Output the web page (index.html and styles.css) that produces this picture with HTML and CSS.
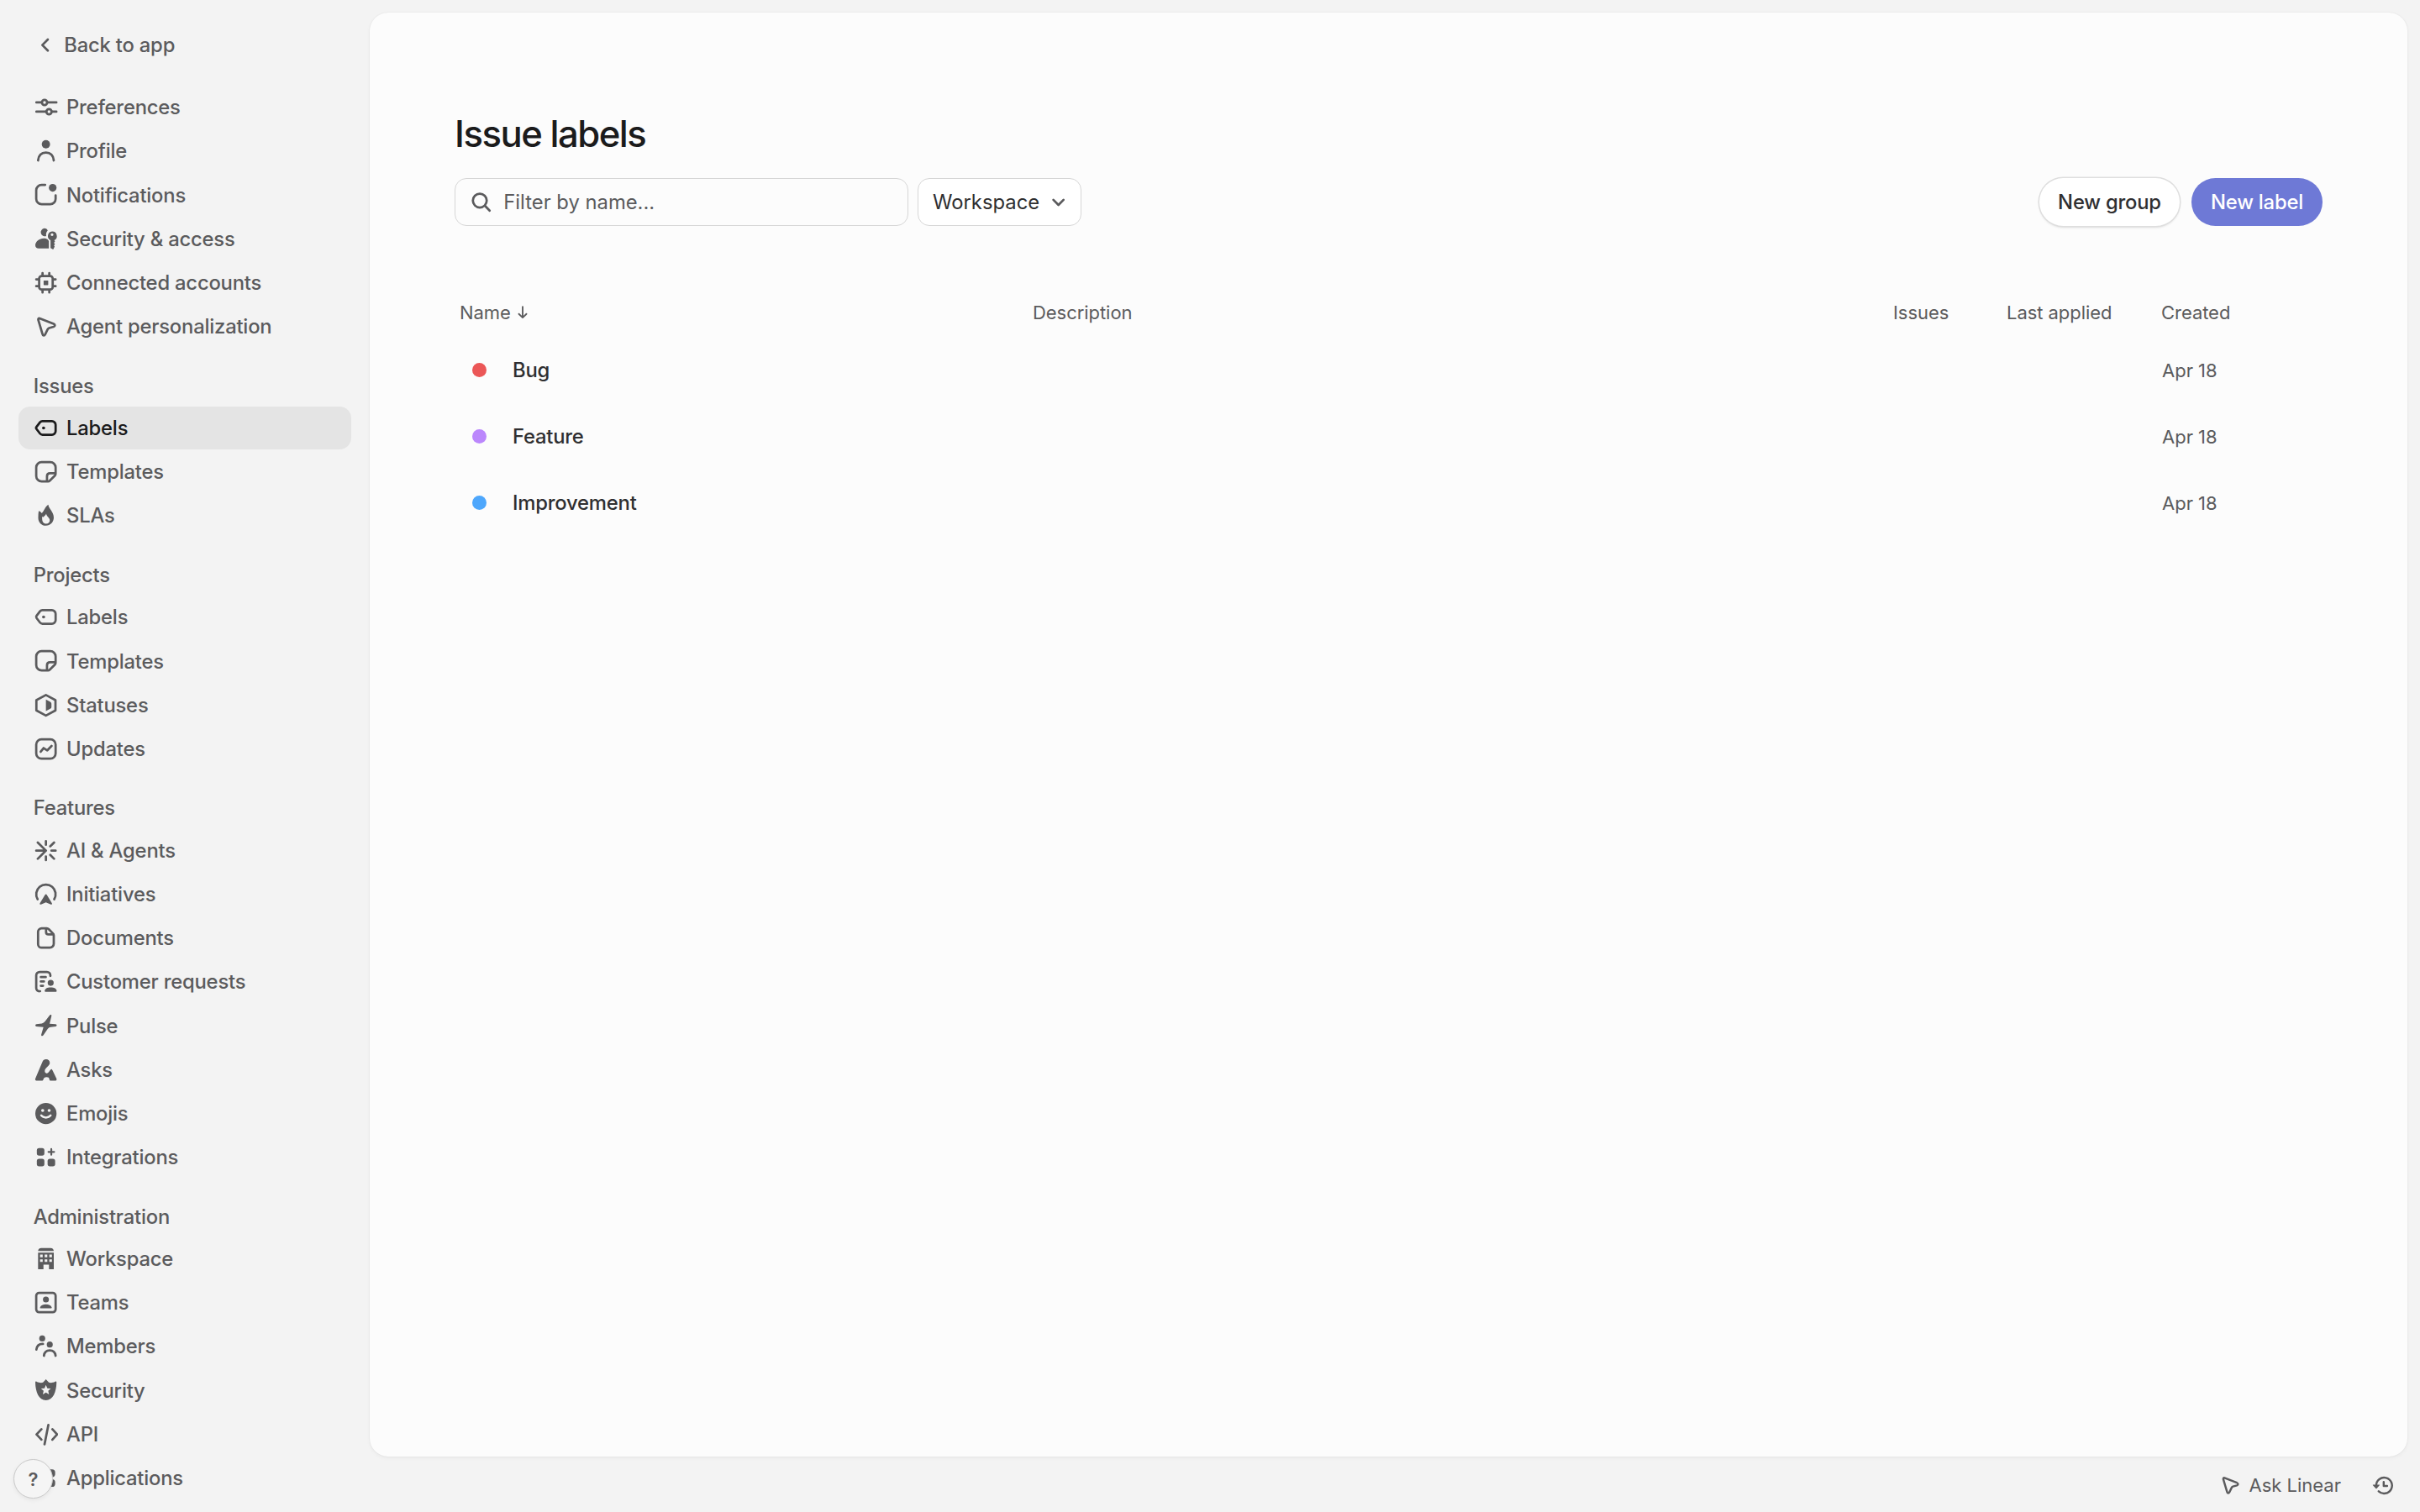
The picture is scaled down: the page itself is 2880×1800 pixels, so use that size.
FILE: index.html
```html
<!DOCTYPE html>
<html lang="en">
<head>
    <meta charset="UTF-8">
    <meta name="viewport" content="width=device-width, initial-scale=1.0">
    <title>Issue labels</title>
    <link rel="stylesheet" href="styles.css">
</head>
<body>
    <!-- shared icons, all on a 16x16 grid -->
    <svg class="sprite">
        <symbol id="i-preferences" viewBox="0 0 16 16">
            <path class="line" d="M1.8 4.9h3.6M8.8 4.9h6M1.8 10.9h6.4M11.6 10.9h3.2"/>
            <circle class="line" cx="7.1" cy="4.9" r="1.7"/>
            <circle class="line" cx="10" cy="10.9" r="1.7"/>
        </symbol>
        <symbol id="i-profile" viewBox="0 0 16 16">
            <circle cx="8" cy="3.7" r="2.7"/>
            <path class="line" d="M2.9 14.2C3.3 10.5 5 9.1 8 9.1s4.7 1.4 5.1 5.1"/>
        </symbol>
        <symbol id="i-notifications" viewBox="0 0 16 16">
            <path class="line" d="M7.5 1.7H5.2A3.5 3.5 0 0 0 1.7 5.2v5.6a3.5 3.5 0 0 0 3.5 3.5h5.6a3.5 3.5 0 0 0 3.5-3.5V8.5"/>
            <circle cx="12.4" cy="3.6" r="2.5"/>
        </symbol>
        <symbol id="i-access" viewBox="0 0 16 16">
            <path d="M6.9 1a2.6 2.6 0 0 1 2.3 1.3C8.3 3.2 7.9 4.7 8.2 6a2.6 2.6 0 1 1-1.3-5Z"/>
            <path d="M6.6 7.5c1 0 1.8.2 2.5.7.2.4.5.7.8.9V14H3.3C1.9 14 1.1 13.2 1.1 12c0-2.2 2.6-4.5 5.5-4.5Z"/>
            <path fill-rule="evenodd" d="M12 3a3 3 0 0 1 1.4 5.7l.5.8-.7.9.7.9-.7.9.5.7-1 1.8-1.7-.9V8.7A3 3 0 0 1 12 3Zm0 1.2a.9.9 0 1 0 0 1.8.9.9 0 0 0 0-1.8Z"/>
        </symbol>
        <symbol id="i-connected" viewBox="0 0 16 16">
            <rect class="line" x="3.6" y="3.6" width="8.8" height="8.8" rx="1.6"/>
            <path class="line" d="M5.8 1.7v1.6M10.2 1.7v1.6M5.8 12.7v1.6M10.2 12.7v1.6M1.7 5.8h1.6M1.7 10.2h1.6M12.7 5.8h1.6M12.7 10.2h1.6"/>
            <rect x="6.5" y="6.5" width="3" height="3" rx=".3"/>
        </symbol>
        <symbol id="i-cursor" viewBox="0 0 16 16">
            <path class="line" d="M3.9 2.7 13 6.3c1.1.5 1.1 1.5 0 1.9L10.1 9c-.5.2-.8.5-1 .9l-1.6 3.3c-.5 1-1.5.9-1.7-.2L3 3.6c-.1-.7.3-1.1.9-.9Z"/>
        </symbol>
        <symbol id="i-label" viewBox="0 0 16 16">
            <path class="line" d="M5.7 3.5h6.2a2.4 2.4 0 0 1 2.4 2.4v4a2.4 2.4 0 0 1-2.4 2.4H5.7c-.6 0-1.1-.2-1.5-.7L1.9 8.6c-.4-.5-.4-.9 0-1.4l2.3-3c.4-.5.9-.7 1.5-.7Z"/>
            <circle cx="6.5" cy="7.9" r="1"/>
        </symbol>
        <symbol id="i-template" viewBox="0 0 16 16">
            <path class="line" d="M9.4 14.3H5.2a3.5 3.5 0 0 1-3.5-3.5V5.2a3.5 3.5 0 0 1 3.5-3.5h5.6a3.5 3.5 0 0 1 3.5 3.5v4.1c0 .5-.2.9-.5 1.2l-3.3 3.3c-.3.3-.7.5-1.1.5Z"/>
            <path class="line" d="M8.7 14v-3.1c0-1.2.8-2 2-2H14"/>
        </symbol>
        <symbol id="i-flame" viewBox="0 0 16 16">
            <path fill-rule="evenodd" d="M9.6.9c-.2 2.2 3.5 4.5 3.5 8.4 0 3-2.2 5.3-5.1 5.3S3 12.5 3 9.5c0-1.7.1-3.2.3-4.5.9.3 1.5.8 2 1.5C7 4.9 7.3 2.2 9.6.9ZM8.2 6.8c-.2 1-1.7 1.7-1.7 2.3-.3-.2-.6-.3-.9-.3-.3 2.5.4 4.6 2.4 4.6 1.7 0 2.5-1.1 2.5-2.4 0-1.4-2.1-2.4-2.3-4.2Z"/>
        </symbol>
        <symbol id="i-status" viewBox="0 0 16 16">
            <path class="line" d="M8 1.3 14.2 4.6v6.7L8 14.7 1.8 11.3V4.6Z"/>
            <path d="M8 4.3 10.8 5.7q.8.4.8 1.2v2.2q0 .8-.8 1.2L8 11.7Z"/>
        </symbol>
        <symbol id="i-update" viewBox="0 0 16 16">
            <rect class="line" x="1.7" y="1.7" width="12.6" height="12.6" rx="3.4"/>
            <path class="line" d="M4.6 9.8 6.5 7.4 8.9 8.9 11.7 6"/>
        </symbol>
        <symbol id="i-ai" viewBox="0 0 16 16">
            <path class="line" d="M8 1.8v2.4M8 11.8v2.4M11.6 8h2.7M13.3 2.7l-2.5 2.5M13.3 13.3l-2.5-2.5M2.7 2.7 8 8l-5.3 5.3M1.7 8H8"/>
        </symbol>
        <symbol id="i-initiative" viewBox="0 0 16 16">
            <path class="line" d="M2.6 11.2a6.3 6.3 0 1 1 10.8 0"/>
            <path d="M7.5 8.2c.2-.4.8-.4 1 0l3.4 5.6c.3.6-.1 1-.7.8L8 13.2l-3.2 1.4c-.6.2-1-.2-.7-.8Z"/>
        </symbol>
        <symbol id="i-document" viewBox="0 0 16 16">
            <path class="line" d="M5.2 1.7h3.3c.6 0 1 .2 1.4.6l2.6 2.7c.4.4.6.9.6 1.4v5.4a2.5 2.5 0 0 1-2.5 2.5H5.2a2.3 2.3 0 0 1-2.3-2.3V4a2.3 2.3 0 0 1 2.3-2.3Z"/>
            <path class="line" d="M8.1 1.9v2.3c0 .9.6 1.5 1.5 1.5h3.1"/>
        </symbol>
        <symbol id="i-request" viewBox="0 0 16 16">
            <path class="line" d="M4.2 14.2h-.4a2 2 0 0 1-2.1-2.1V3.9a2.2 2.2 0 0 1 2.2-2.2h4.8a2.2 2.2 0 0 1 2.2 2.2v.4M4.7 5h3.2M4.7 7.9h2M4.7 10.7h1.4"/>
            <circle cx="11.1" cy="8.8" r="1.95"/>
            <path d="M7.2 14.1c0-1.5 1.7-2.3 3.9-2.3s3.9.8 3.9 2.3c0 .3-.2.5-.5.5H7.7c-.3 0-.5-.2-.5-.5Z"/>
        </symbol>
        <symbol id="i-pulse" viewBox="0 0 16 16">
            <path d="M10.3 1.6c.6-.8 1.6-.6 1.3.5L10.4 7l3.9.2c1 .1 1 1.3 0 1.5l-3.2.4c-1 .2-1.5.5-2 1.3l-2.7 4c-.7.9-1.7.5-1.4-.5L6.4 9.100l-4.600-.3c-.9-.1-.9-1.300 0-1.500l3.500-.5c.9-.2 1.500-.6 2.100-1.300Z"/>
        </symbol>
        <symbol id="i-asks" viewBox="0 0 16 16">
            <path d="M8.100 1.100c1.900 0 2.900 1.700 2.200 3.300-.5 1.200-2.100 1.900-2.800 3.300-.5 1-.2 2.200.8 2.500 1.600.4 2-2.400 3.500-2.700.4.500.8 1.300 1.100 2l1.900 4c.4.900 0 1.500-.9 1.500h-2.600c-.7 0-1-.3-1.100-1-.1-.9-.6-1.300-1.800-1.300s-1.800.5-2 1.300c-.2.700-.5 1-1.200 1H2.100c-1 0-1.300-.6-.9-1.500l4.500-10.700c.4-1.100 1.300-1.700 2.400-1.700Z"/>
        </symbol>
        <symbol id="i-emoji" viewBox="0 0 16 16">
            <circle cx="8" cy="8" r="6.9"/>
            <circle class="hole" cx="5.9" cy="6" r="1"/>
            <circle class="hole" cx="10.1" cy="6" r="1"/>
            <path class="hole-line" d="M4.9 9.2c1.5 1.9 4.7 1.9 6.2 0"/>
        </symbol>
        <symbol id="i-integration" viewBox="0 0 16 16">
            <rect x="2.1" y="2.1" width="4.9" height="4.9" rx="1.5"/>
            <rect x="2.1" y="9" width="4.9" height="4.9" rx="1.5"/>
            <rect x="9.1" y="9" width="4.9" height="4.9" rx="1.5"/>
            <path class="line thin" d="M11.5 2.700v3.700M9.650 4.550h3.700"/>
        </symbol>
        <symbol id="i-workspace" viewBox="0 0 16 16">
            <path d="M5 .9h6c1.300 0 2.100.8 2.100 2H2.900c0-1.200.8-2 2.100-2Z"/>
            <path fill-rule="evenodd" d="M2.900 4h10.200v10.700H10v-2.900H6.400v2.900H2.900ZM4.200 5.200v1.700h1.700V5.200Zm3 0v1.700h1.700V5.200Zm3 0v1.700h1.700V5.200Zm-6 3.100V10h1.700V8.300Zm3 0V10h1.700V8.300Zm3 0V10h1.700V8.300Z"/>
        </symbol>
        <symbol id="i-team" viewBox="0 0 16 16">
            <rect class="line" x="1.7" y="1.7" width="12.6" height="12.6" rx="1.9"/>
            <circle cx="8" cy="6" r="1.95"/>
            <path d="M4.200 11.200c.4-1.300 1.900-2 3.800-2s3.400.7 3.800 2c.1.300-.1.500-.4.500H4.600c-.3 0-.5-.2-.4-.5Z"/>
        </symbol>
        <symbol id="i-members" viewBox="0 0 16 16">
            <circle cx="5.6" cy="2.95" r="1.95"/>
            <circle cx="10.5" cy="6.9" r="1.95"/>
            <path class="line" d="M1.800 10.200c.3-2.600 1.800-3.800 4.300-3.700M6.700 14.200c.3-2.500 1.400-3.500 3.800-3.500s3.500 1 3.800 3.500"/>
        </symbol>
        <symbol id="i-security" viewBox="0 0 16 16">
            <path fill-rule="evenodd" d="M8 1.100 9.900 3.200c1.200.4 2.600.2 4.200-.6.500-.2.800 0 .8.600C14.800 9.400 12.600 14.800 8 14.800S1.200 9.400 1.100 3.200c0-.6.300-.8.800-.6 1.600.8 3 1 4.200.6Zm0 3.700-.9 2.100-2.300.2 1.700 1.500-.5 2.300L8 9.700l2 1.200-.5-2.300 1.700-1.500-2.300-.2Z"/>
        </symbol>
        <symbol id="i-api" viewBox="0 0 16 16">
            <path class="line" d="M5.100 4.600 1.900 8l3.200 3.400M12.200 4.600 15.300 8l-3.100 3.400M9.600 1.800 7.100 14.400"/>
        </symbol>
        <symbol id="i-apps" viewBox="0 0 16 16">
            <rect x="2.1" y="2.3" width="5" height="5" rx="2"/>
            <rect x="9" y="2.3" width="5" height="5" rx="2"/>
            <rect x="2.1" y="8.7" width="5" height="5" rx="2"/>
            <rect x="9" y="8.7" width="5" height="5" rx="2"/>
        </symbol>
        <symbol id="i-back" viewBox="0 0 16 16">
            <path class="line" d="M9.8 4.4 6.2 8l3.6 3.6"/>
        </symbol>
        <symbol id="i-down" viewBox="0 0 16 16">
            <path class="line" d="M4.7 6.5 8 9.8l3.3-3.3"/>
        </symbol>
        <symbol id="i-search" viewBox="0 0 16 16">
            <circle class="line" cx="7.1" cy="7" r="4.5"/>
            <path class="line" d="M10.6 10.5 13.5 13.5"/>
        </symbol>
        <symbol id="i-sort" viewBox="0 0 16 16">
            <path class="line" d="M8 2.5v10.2M4.4 9.4 8 12.9l3.6-3.5"/>
        </symbol>
        <symbol id="i-history" viewBox="0 0 16 16">
            <path class="line" d="M3 8.3A5.8 5.8 0 1 1 4.8 12.5M8.5 5.7v2.9h2.5"/>
            <path d="M.8 7.7h4.4c.3 0 .4.3.2.5L3.4 10.400c-.2.200-.5.200-.7 0L.6 8.200c-.2-.2-.1-.5.2-.5Z"/>
        </symbol>
    </svg>

    <div class="app">
        <aside class="sidebar">
            <a class="back"><svg class="icon"><use href="#i-back"/></svg>Back to app</a>

            <nav class="group">
                <a class="item"><svg class="icon"><use href="#i-preferences"/></svg>Preferences</a>
                <a class="item"><svg class="icon"><use href="#i-profile"/></svg>Profile</a>
                <a class="item"><svg class="icon"><use href="#i-notifications"/></svg>Notifications</a>
                <a class="item"><svg class="icon"><use href="#i-access"/></svg>Security &amp; access</a>
                <a class="item"><svg class="icon"><use href="#i-connected"/></svg>Connected accounts</a>
                <a class="item"><svg class="icon"><use href="#i-cursor"/></svg>Agent personalization</a>
            </nav>

            <h2 class="group-title">Issues</h2>
            <nav class="group">
                <a class="item active"><svg class="icon"><use href="#i-label"/></svg>Labels</a>
                <a class="item"><svg class="icon"><use href="#i-template"/></svg>Templates</a>
                <a class="item"><svg class="icon"><use href="#i-flame"/></svg>SLAs</a>
            </nav>

            <h2 class="group-title">Projects</h2>
            <nav class="group">
                <a class="item"><svg class="icon"><use href="#i-label"/></svg>Labels</a>
                <a class="item"><svg class="icon"><use href="#i-template"/></svg>Templates</a>
                <a class="item"><svg class="icon"><use href="#i-status"/></svg>Statuses</a>
                <a class="item"><svg class="icon"><use href="#i-update"/></svg>Updates</a>
            </nav>

            <h2 class="group-title">Features</h2>
            <nav class="group">
                <a class="item"><svg class="icon"><use href="#i-ai"/></svg>AI &amp; Agents</a>
                <a class="item"><svg class="icon"><use href="#i-initiative"/></svg>Initiatives</a>
                <a class="item"><svg class="icon"><use href="#i-document"/></svg>Documents</a>
                <a class="item"><svg class="icon"><use href="#i-request"/></svg>Customer requests</a>
                <a class="item"><svg class="icon"><use href="#i-pulse"/></svg>Pulse</a>
                <a class="item"><svg class="icon"><use href="#i-asks"/></svg>Asks</a>
                <a class="item"><svg class="icon"><use href="#i-emoji"/></svg>Emojis</a>
                <a class="item"><svg class="icon"><use href="#i-integration"/></svg>Integrations</a>
            </nav>

            <h2 class="group-title">Administration</h2>
            <nav class="group">
                <a class="item"><svg class="icon"><use href="#i-workspace"/></svg>Workspace</a>
                <a class="item"><svg class="icon"><use href="#i-team"/></svg>Teams</a>
                <a class="item"><svg class="icon"><use href="#i-members"/></svg>Members</a>
                <a class="item"><svg class="icon"><use href="#i-security"/></svg>Security</a>
                <a class="item"><svg class="icon"><use href="#i-api"/></svg>API</a>
                <a class="item"><svg class="icon"><use href="#i-apps"/></svg>Applications</a>
            </nav>
        </aside>

        <div class="content">
            <main class="panel">
                <h1 class="title">Issue labels</h1>

                <div class="toolbar">
                    <div class="filter"><svg class="icon"><use href="#i-search"/></svg>Filter by name...</div>
                    <div class="select">Workspace<svg class="icon"><use href="#i-down"/></svg></div>
                    <button class="button new-group">New group</button>
                    <button class="button new-label">New label</button>
                </div>

                <div class="table">
                    <div class="row head">
                        <div class="sort">Name<svg class="icon"><use href="#i-sort"/></svg></div>
                        <div>Description</div>
                        <div>Issues</div>
                        <div>Last applied</div>
                        <div>Created</div>
                    </div>
                    <div class="row">
                        <div class="name"><span class="dot red"></span>Bug</div>
                        <div class="date">Apr 18</div>
                    </div>
                    <div class="row">
                        <div class="name"><span class="dot purple"></span>Feature</div>
                        <div class="date">Apr 18</div>
                    </div>
                    <div class="row">
                        <div class="name"><span class="dot blue"></span>Improvement</div>
                        <div class="date">Apr 18</div>
                    </div>
                </div>
            </main>

            <footer class="footer">
                <a class="ask"><svg class="icon"><use href="#i-cursor"/></svg>Ask Linear</a>
                <svg class="icon history"><use href="#i-history"/></svg>
            </footer>
        </div>
    </div>

    <button class="help">?</button>
</body>
</html>
```

FILE: styles.css
```css
* {
    box-sizing: border-box;
}

body {
    margin: 0;
    background-color: #f3f3f3;
    color: #5b5b5d;
    font-family: Inter, sans-serif;
    font-size: 23.8px;
    font-weight: 500;
    letter-spacing: -.2px;
    overflow: hidden;
}

.sprite {
    display: none;
}

.icon {
    width: 29.3px;
    height: 29.3px;
    flex: none;
    fill: currentColor;
}

.line {
    fill: none;
    stroke: currentColor;
    stroke-width: 1.5;
    stroke-linecap: round;
    stroke-linejoin: round;
}

.thin {
    stroke-width: 1.2;
}

.hole {
    fill: #f3f3f3;
}

.hole-line {
    fill: none;
    stroke: #f3f3f3;
    stroke-width: 1.3;
    stroke-linecap: round;
}

.app {
    display: flex;
    height: 1800px;
}

/* sidebar */
.sidebar {
    width: 440px;
    flex: none;
    padding: 28px 22px 0;
    overflow: hidden;
}

.back {
    display: flex;
    align-items: center;
    gap: 8px;
    height: 51px;
    padding-left: 17px;
    margin-bottom: 22.7px;
}

.group {
    display: flex;
    flex-direction: column;
    gap: 1px;
}

.item {
    display: flex;
    align-items: center;
    gap: 10px;
    height: 51.16px;
    flex: none;
    padding: 1px 0 0 17.7px;
    border-radius: 14px;
}

.item.active {
    background-color: #e4e4e4;
    color: #1b1b1c;
}

.group-title {
    margin: 30.9px 0 9px;
    padding-left: 17.7px;
    font-size: 23.8px;
    font-weight: 500;
    line-height: 30px;
}

/* main panel */
.content {
    flex: 1;
    display: flex;
    flex-direction: column;
    padding: 15px 15px 0 0;
}

.panel {
    height: 1719px;
    padding: 118px 101px 0;
    background-color: #fcfcfc;
    border-radius: 22px;
    box-shadow: 0 0 2px rgba(0, 0, 0, .08), 0 2px 5px rgba(0, 0, 0, .04);
}

.title {
    margin: 0;
    color: #1b1b1c;
    font-size: 43.6px;
    font-weight: 500;
    line-height: 53px;
    letter-spacing: -.034em;
}

.toolbar {
    display: flex;
    align-items: center;
    margin-top: 26px;
}

.filter {
    display: flex;
    align-items: center;
    gap: 12px;
    width: 540px;
    height: 57px;
    padding-left: 16px;
    border: 1px solid #d6d6d6;
    border-radius: 14px;
    font-weight: 400;
    letter-spacing: 0;
}

.select {
    display: flex;
    align-items: center;
    justify-content: space-between;
    width: 195px;
    height: 57px;
    margin-left: 11px;
    padding: 0 12px 0 17px;
    background-color: #fff;
    border: 1px solid #d6d6d6;
    border-radius: 14px;
    color: #2f2f31;
    font-weight: 400;
    letter-spacing: 0;
}

.select .icon {
    color: #5b5b5d;
}

.button {
    height: 57px;
    padding: 0;
    border: none;
    border-radius: 29px;
    font: inherit;
    letter-spacing: inherit;
    text-align: center;
}

.new-group {
    width: 167px;
    margin-left: auto;
    background-color: #fff;
    color: #2f2f31;
    box-shadow: 0 0 0 1.5px #dedede, 0 2px 3px rgba(0, 0, 0, .12);
}

.new-label {
    width: 156px;
    margin-left: 14px;
    background-color: #6e79d6;
    color: #fff;
}

/* labels table */
.table {
    margin-top: 75px;
}

.row {
    display: grid;
    grid-template-columns: 682px 1024px 135px 184px 1fr;
    align-items: center;
    height: 79px;
    padding-left: 6px;
}

.head {
    height: 55px;
    margin-bottom: 2px;
    font-size: 22px;
    font-weight: 400;
    letter-spacing: -.05px;
}

.sort {
    display: flex;
    align-items: center;
    gap: 4px;
}

.sort .icon {
    width: 20px;
    height: 20px;
}

.name {
    display: flex;
    align-items: center;
    gap: 31px;
    padding-left: 15px;
    color: #2f2f31;
}

.dot {
    width: 17px;
    height: 17px;
    border-radius: 50%;
}

.red {
    background-color: #eb5757;
}

.purple {
    background-color: #bb87fc;
}

.blue {
    background-color: #4ea7fc;
}

.date {
    grid-column: 5;
    padding-left: 1px;
    font-size: 22px;
    font-weight: 400;
    letter-spacing: 0;
}

/* bottom bar */
.footer {
    flex: 1;
    display: flex;
    align-items: center;
    justify-content: flex-end;
    gap: 37px;
    padding: 2px 16px 0 0;
}

.ask {
    display: flex;
    align-items: center;
    gap: 10px;
    font-size: 22px;
    font-weight: 400;
    letter-spacing: 0;
}

.ask .icon,
.history {
    width: 26px;
    height: 26px;
}

/* floats above the sidebar */
.help {
    position: absolute;
    left: 16px;
    bottom: 16px;
    width: 47px;
    height: 47px;
    padding: 0;
    background-color: #f5f5f5;
    border: 1.5px solid #c9c9c9;
    border-radius: 50%;
    box-shadow: 0 2px 5px rgba(0, 0, 0, .06);
    color: #5b5b5d;
    font: inherit;
    font-size: 22px;
    font-weight: 600;
}
```
